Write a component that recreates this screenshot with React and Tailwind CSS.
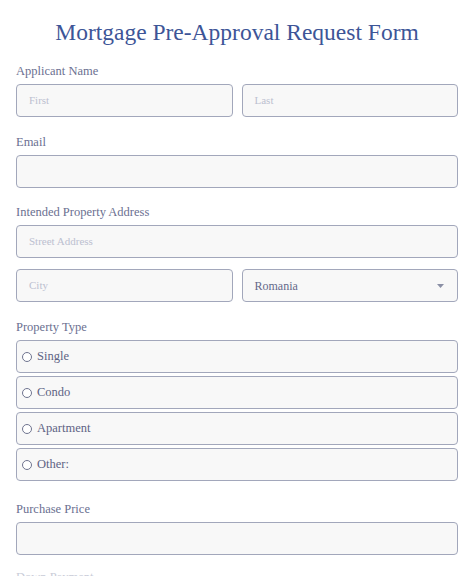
import React from 'react';

const Label = ({ children, className = '' }) => (
    <div className={`h-[18px] text-[12.5px] leading-[18px] text-[#6b7091] ${className}`}>{children}</div>
);

const Field = ({ placeholder, children, className = '' }) => (
    <div className={`h-[33px] flex items-center rounded-[4px] border-[1.5px] border-[#a2a7bb] bg-[#f8f8f8] px-3 ${className}`}>
        {placeholder && <span className="text-[11px] text-[#bcc0d0]">{placeholder}</span>}
        {children}
    </div>
);

const Option = ({ label }) => (
    <div className="h-[33px] flex items-center gap-[5px] rounded-[4px] border-[1.5px] border-[#a2a7bb] bg-[#f8f8f8] pl-[5px]">
        <span className="w-[10px] h-[10px] rounded-full border border-[#6f748f] bg-white"></span>
        <span className="text-[12.5px] text-[#5e6384]">{label}</span>
    </div>
);

const App = () => {
    return (
        <div className="w-[474px] h-[576px] overflow-hidden bg-white px-4 font-['Liberation_Serif',serif]">
            <h1 className="pt-4 h-12 text-center text-[23.5px] leading-8 text-[#3d5597]">Mortgage Pre-Approval Request Form</h1>

            <Label className="mt-[14px]">Applicant Name</Label>
            <div className="mt-1 grid grid-cols-2 gap-[9px]">
                <Field placeholder="First" />
                <Field placeholder="Last" />
            </div>

            <Label className="mt-4">Email</Label>
            <Field className="mt-1" />

            <Label className="mt-[15px]">Intended Property Address</Label>
            <Field className="mt-1" placeholder="Street Address" />
            <div className="mt-[11px] grid grid-cols-2 gap-[9px]">
                <Field placeholder="City" />
                <Field>
                    <span className="flex-1 text-[12px] text-[#64698a]">Romania</span>
                    <svg width="7" height="4" viewBox="0 0 7 4" className="mr-[1px]">
                        <path d="M0 0 L7 0 L3.5 4 Z" fill="#8a8fa5" />
                    </svg>
                </Field>
            </div>

            <Label className="mt-4">Property Type</Label>
            <div className="mt-1 flex flex-col gap-[3px]">
                <Option label="Single" />
                <Option label="Condo" />
                <Option label="Apartment" />
                <Option label="Other:" />
            </div>

            <Label className="mt-[19px]">Purchase Price</Label>
            <Field className="mt-1" />

            <Label className="mt-[13px] text-[#c9ccd8]">Down Payment</Label>
        </div>
    );
};

export default App;
